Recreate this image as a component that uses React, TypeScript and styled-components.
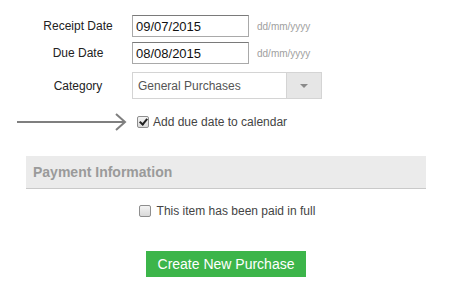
import styled, { createGlobalStyle } from "styled-components";

const GlobalStyle = createGlobalStyle`
    body {
        margin: 0;
        background: #ffffff;
        font-family: "Liberation Sans", Arial, sans-serif;
        color: #333333;
    }
`

const Page = styled.div`
    width: 449px;
    padding-top: 15px;
`

const Fields = styled.div`
    display: flex;
    flex-direction: column;
    gap: 5px;
    padding-left: 26px;
`

const FieldRow = styled.div<{ $spaced?: boolean }>`
    display: flex;
    align-items: center;
    margin-top: ${(p) => (p.$spaced ? "3px" : "0")};
`

const Label = styled.label`
    width: 104px;
    margin-right: 2px;
    text-align: center;
    font-size: 12px;
    color: #222222;
`

const DateInput = styled.input`
    box-sizing: border-box;
    width: 117px;
    height: 22px;
    margin: 0;
    padding: 0 3px;
    border: 1px solid #a9a9a9;
    border-top-color: #7a7a7a;
    font-family: "Liberation Sans", Arial, sans-serif;
    font-size: 13px;
    color: #111111;
    outline: none;
`

const Hint = styled.span`
    margin-left: 8px;
    font-size: 10px;
    color: #a0a0a0;
`

const Select = styled.div`
    box-sizing: border-box;
    display: flex;
    width: 190px;
    height: 27px;
    border: 1px solid #d4d4d4;
`

const SelectValue = styled.span`
    flex: 1;
    display: flex;
    align-items: center;
    padding-left: 5px;
    font-size: 12px;
    color: #555555;
`

const SelectButton = styled.span`
    width: 34px;
    display: flex;
    align-items: center;
    justify-content: center;
    background: #e6e6e6;
    border-left: 1px solid #d4d4d4;

    &::after {
        content: "";
        border-left: 4px solid transparent;
        border-right: 4px solid transparent;
        border-top: 4px solid #8a8a8a;
    }
`

const CalendarRow = styled.div`
    display: flex;
    align-items: center;
    height: 16px;
    margin-top: 15px;
    padding-left: 17px;
`

const Arrow = styled.svg`
    width: 111px;
    height: 20px;
    margin-right: 9px;
`

const Check = styled.input`
    appearance: none;
    position: relative;
    box-sizing: border-box;
    width: 12px;
    height: 12px;
    margin: 0;
    border: 1px solid #8e8e8e;
    border-radius: 2px;
    background: linear-gradient(#f4f4f4, #d9d9d9);

    &:checked::after {
        content: "";
        position: absolute;
        left: 3px;
        top: 0;
        width: 3px;
        height: 6px;
        border: solid #222222;
        border-width: 0 2px 2px 0;
        transform: rotate(40deg);
    }
`

const CheckText = styled.span`
    margin-left: 4px;
    font-size: 12px;
    color: #444444;
`

const Section = styled.section`
    width: 400px;
    margin: 26px 0 0 26px;
`

const SectionTitle = styled.h3`
    box-sizing: border-box;
    display: flex;
    align-items: center;
    height: 33px;
    margin: 0;
    padding-left: 7px;
    background: #ebebeb;
    border-bottom: 1px solid #c9c9c9;
    font-size: 14px;
    font-weight: 700;
    color: #9a9a9a;
`

const PaidRow = styled.div`
    display: flex;
    justify-content: center;
    align-items: center;
    height: 16px;
    margin-top: 14px;
    padding-left: 2px;

    ${CheckText} {
        margin-left: 6px;
    }
`

const Actions = styled.div`
    display: flex;
    justify-content: center;
    margin-top: 32px;
`

const CreateButton = styled.button`
    height: 26px;
    padding: 0 12px;
    border: none;
    background: #3cb54a;
    color: #ffffff;
    font-family: "Liberation Sans", Arial, sans-serif;
    font-size: 14px;
`

const App: React.FC = () => {
    return <Page>
        <GlobalStyle />
        <Fields>
            <FieldRow>
                <Label>Receipt Date</Label>
                <DateInput defaultValue="09/07/2015" />
                <Hint>dd/mm/yyyy</Hint>
            </FieldRow>
            <FieldRow>
                <Label>Due Date</Label>
                <DateInput defaultValue="08/08/2015" />
                <Hint>dd/mm/yyyy</Hint>
            </FieldRow>
            <FieldRow $spaced>
                <Label>Category</Label>
                <Select>
                    <SelectValue>General Purchases</SelectValue>
                    <SelectButton />
                </Select>
            </FieldRow>
        </Fields>
        <CalendarRow>
            <Arrow viewBox="0 0 111 20">
                <line x1="0" y1="10" x2="108" y2="10" stroke="#7f7f7f" strokeWidth="2" />
                <polyline points="99,2 108,10 99,18" fill="none" stroke="#7f7f7f" strokeWidth="2" />
            </Arrow>
            <Check type="checkbox" defaultChecked />
            <CheckText>Add due date to calendar</CheckText>
        </CalendarRow>
        <Section>
            <SectionTitle>Payment Information</SectionTitle>
            <PaidRow>
                <Check type="checkbox" />
                <CheckText>This item has been paid in full</CheckText>
            </PaidRow>
            <Actions>
                <CreateButton>Create New Purchase</CreateButton>
            </Actions>
        </Section>
    </Page>
};

export default App;
